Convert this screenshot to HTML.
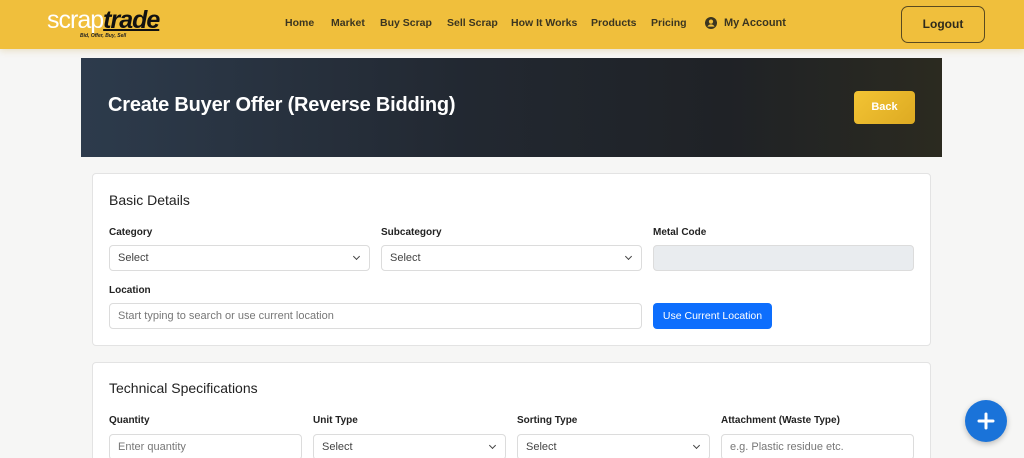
<!DOCTYPE html>
<html><head><style>
*{box-sizing:border-box;margin:0;padding:0}
html,body{width:1024px;height:458px;overflow:hidden}
body{background:#f6f6f5;font-family:"Liberation Sans",sans-serif;position:relative}
.hdr{position:absolute;left:0;top:0;width:1024px;height:49px;background:#f0bf3c;box-shadow:0 2px 6px rgba(200,160,60,.25)}
.logo{position:absolute;left:47px;top:8px;font-size:25px;letter-spacing:-1px;line-height:25px}
.logo .s{color:#fff}.logo .t{color:#111;font-weight:bold;font-style:italic;text-decoration:underline;text-decoration-thickness:2px}
.tag{position:absolute;left:80px;top:33px;font-size:5px;font-weight:bold;font-style:italic;color:#222}
.nav{position:absolute;top:17px;font-size:10.5px;font-weight:bold;color:#3b3520}
.lo{position:absolute;left:901px;top:6px;width:84px;height:37px;border:1.5px solid #5a4a20;border-radius:7px;font-size:12px;font-weight:bold;color:#2e2a1c;text-align:center;line-height:35px}
.ban{position:absolute;left:81px;top:58px;width:861px;height:99px;background:linear-gradient(90deg,#2d3b4c 0%,#222831 45%,#1f2226 75%,#2b2a20 100%)}
.ban h1{position:absolute;left:27px;top:36px;color:#fff;font-size:20px;font-weight:bold;letter-spacing:-.2px}
.back{position:absolute;left:773px;top:33px;width:61px;height:33px;background:linear-gradient(135deg,#f3c434,#ddaa22);border-radius:4px;color:#fff;font-weight:bold;font-size:11px;text-align:center;line-height:33px}
.card{position:absolute;left:92px;width:839px;background:#fff;border:1px solid #e3e3e3;border-radius:4px}
.ct{position:absolute;left:16px;font-size:14px;color:#222}
.lb{position:absolute;font-size:10px;font-weight:bold;color:#222}
.in{position:absolute;height:26px;border:1px solid #dcdcdc;border-radius:4px;background:#fff;font-size:11px;color:#444;padding-left:8px;line-height:24px}
.in.ph{color:#777}
.car{position:absolute;right:10px;top:8px;width:5px;height:5px;border-right:1.3px solid #444;border-bottom:1.3px solid #444;transform:rotate(45deg)}
.fab{position:absolute;left:965px;top:400px;width:42px;height:42px;border-radius:50%;background:#1a73d9;box-shadow:0 2px 6px rgba(0,0,0,.25)}
</style></head><body>
<div class="hdr">
<div class="logo"><span class="s">scrap</span><span class="t">trade</span></div>
<div class="tag">Bid, Offer, Buy, Sell</div>
<span class="nav" style="left:285px">Home</span>
<span class="nav" style="left:331px">Market</span>
<span class="nav" style="left:380px">Buy Scrap</span>
<span class="nav" style="left:447px">Sell Scrap</span>
<span class="nav" style="left:511px">How It Works</span>
<span class="nav" style="left:591px">Products</span>
<span class="nav" style="left:651px">Pricing</span>
<svg style="position:absolute;left:705px;top:17px" width="12" height="12" viewBox="0 0 12 12"><circle cx="6" cy="6" r="6" fill="#3b3520"/><circle cx="6" cy="4.6" r="2.1" fill="#f0bf3c"/><path d="M2.4 9.6c1-1.6 2.2-2.2 3.6-2.2s2.6.6 3.6 2.2" fill="#f0bf3c"/></svg>
<span class="nav" style="left:724px;font-size:11px">My Account</span>
<div class="lo">Logout</div>
</div>
<div class="ban"><h1>Create Buyer Offer (Reverse Bidding)</h1><div class="back">Back</div></div>
<div class="card" style="top:173px;height:173px">
<div class="ct" style="top:18px">Basic Details</div>
<div class="lb" style="left:16px;top:53px">Category</div>
<div class="lb" style="left:288px;top:53px">Subcategory</div>
<div class="lb" style="left:560px;top:53px">Metal Code</div>
<div class="in" style="left:16px;top:71px;width:261px">Select<div class="car"></div></div>
<div class="in" style="left:288px;top:71px;width:261px">Select<div class="car"></div></div>
<div class="in" style="left:560px;top:71px;width:261px;background:#e9ecef"></div>
<div class="lb" style="left:16px;top:111px">Location</div>
<div class="in ph" style="left:16px;top:129px;width:533px">Start typing to search or use current location</div>
<div style="position:absolute;left:560px;top:129px;width:119px;height:26px;background:#0d6efd;border-radius:4px;color:#fff;font-size:10.5px;text-align:center;line-height:26px">Use Current Location</div>
</div>
<div class="card" style="top:362px;height:110px">
<div class="ct" style="top:17px">Technical Specifications</div>
<div class="lb" style="left:16px;top:52px">Quantity</div>
<div class="lb" style="left:220px;top:52px">Unit Type</div>
<div class="lb" style="left:424px;top:52px">Sorting Type</div>
<div class="lb" style="left:628px;top:52px">Attachment (Waste Type)</div>
<div class="in ph" style="left:16px;top:71px;width:193px">Enter quantity</div>
<div class="in" style="left:220px;top:71px;width:193px">Select<div class="car"></div></div>
<div class="in" style="left:424px;top:71px;width:193px">Select<div class="car"></div></div>
<div class="in ph" style="left:628px;top:71px;width:193px">e.g. Plastic residue etc.</div>
</div>
<div class="fab"><svg width="42" height="42" viewBox="0 0 42 42"><path d="M21 14v14M14 21h14" stroke="#fff" stroke-width="3" stroke-linecap="round"/></svg></div>
</body></html>
